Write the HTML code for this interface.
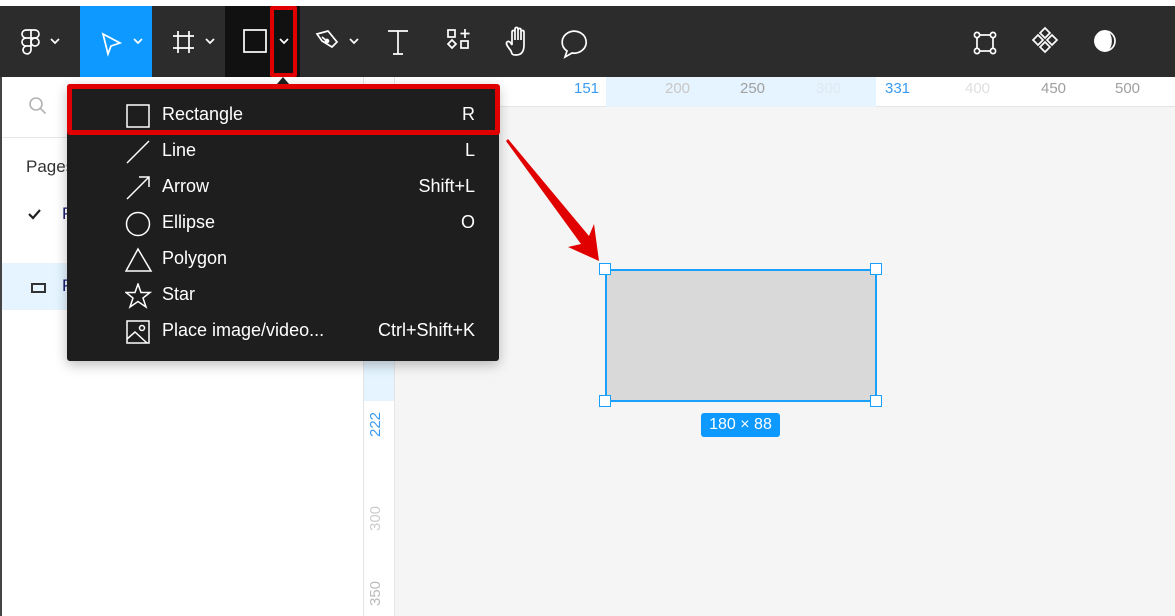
<!DOCTYPE html>
<html><head><meta charset="utf-8"><style>
*{margin:0;padding:0;box-sizing:border-box}
body{width:1175px;height:616px;overflow:hidden;background:#f5f5f5;font-family:"Liberation Sans",sans-serif;position:relative}
.abs{position:absolute}
.mi{position:absolute;left:0;width:432px;height:36px;color:#fff;font-size:18px}
.mi .t{position:absolute;left:95px;top:7px}
.mi .k{position:absolute;right:24px;top:7px}
.mi svg{position:absolute;left:58px;top:6px}
.rl{position:absolute;top:80px;font-size:15px;color:#b3b3b3}
</style></head><body>
<div class="abs" style="left:0;top:0;width:1175px;height:6px;background:#fff"></div>
<div class="abs" style="left:0;top:6px;width:1175px;height:71px;background:#2c2c2c"></div>
<div class="abs" style="left:80px;top:6px;width:72px;height:71px;background:#0d99ff"></div>
<div class="abs" style="left:225px;top:6px;width:75px;height:71px;background:#111"></div>
<svg class="abs" style="left:0;top:6px" width="1175" height="71" fill="none" stroke="#fff" stroke-width="1.7">
<g transform="translate(22,24)"><path d="M4 0h5v8H4a4 4 0 0 1 0-8zM9 0h4a4 4 0 0 1 0 8H9zM4 8h5v8H4a4 4 0 0 1 0-8zM4 16h5v4a4 4 0 1 1-5-4z"/><circle cx="13" cy="12" r="4"/></g>
<path d="M51 33l4 4 4-4"/>
<path d="M103 28l5 20 3-8 9-3z"/><path d="M134 33l4 4 4-4"/>
<path d="M178 25v22M189 25v22M173 30h21M173 42h21"/><path d="M206 33l4 4 4-4"/>
<rect x="244" y="24" width="22" height="22"/>
<path d="M317 28l11-3 9 11-5 5-10-6zM322 31l6 5" /><circle cx="327" cy="35" r="1.5"/><path d="M350 33l4 4 4-4"/>
<path d="M388 25h20M398 25v23M393 48h10"/>
<rect x="448" y="24" width="7" height="7"/><path d="M465 23v9M460.5 27.5h9"/><path d="M452 34l4 4-4 4-4-4z"/><rect x="461" y="35" width="7" height="7"/>
<path d="M511 45c-2-3-6-7-4-9s4 1 5 3v-13c0-2 3-2 3 0v8-11c0-2 3-2 3 0v11-10c0-2 3-2 3 0v10-8c0-2 3-2 3 0v13c0 7-3 10-8 10s-4-2-5-4z"/>
<path d="M567 45a12 11 0 1 1 5 2l-7 4z"/>
<rect x="977" y="29" width="16" height="16"/><g fill="#2c2c2c"><circle cx="977" cy="29" r="2.6"/><circle cx="993" cy="29" r="2.6"/><circle cx="977" cy="45" r="2.6"/><circle cx="993" cy="45" r="2.6"/></g>
<path d="M1045 24l5 5-5 5-5-5zM1045 38l5 5-5 5-5-5zM1038 31l5 5-5 5-5-5zM1052 31l5 5-5 5-5-5z" transform="translate(0,-2)"/>
<circle cx="1105" cy="35" r="10"/><path d="M1105 25a10 10 0 0 0 0 20a6 10 0 0 0 0-20z" fill="#fff"/>
</svg>
<svg class="abs" style="left:278px;top:36px" width="12" height="10" fill="none" stroke="#fff" stroke-width="1.7"><path d="M2 3l4 4 4-4"/></svg>
<div class="abs" style="left:270px;top:6px;width:27px;height:71px;border:4px solid #e00000;border-radius:2px"></div>
<div class="abs" style="left:0;top:77px;width:363px;height:539px;background:#fff;border-left:2px solid #444"></div>
<div class="abs" style="left:2px;top:137px;width:361px;height:1px;background:#e6e6e6"></div>
<svg class="abs" style="left:28px;top:96px" width="20" height="20" fill="none" stroke="#b3b3b3" stroke-width="1.6"><circle cx="8" cy="8" r="6"/><path d="M12.5 12.5l5 5"/></svg>
<div class="abs" style="left:26px;top:157px;font-size:17px;color:#333">Pages</div>
<svg class="abs" style="left:27px;top:207px" width="16" height="14" fill="none" stroke="#222" stroke-width="2.2"><path d="M2 7l4 4 7-8"/></svg>
<div class="abs" style="left:62px;top:204px;font-size:17px;color:#1a1a6e">P</div>
<div class="abs" style="left:2px;top:263px;width:361px;height:47px;background:#e5f4ff"></div>
<div class="abs" style="left:31px;top:283px;width:15px;height:10px;border:2px solid #333"></div>
<div class="abs" style="left:62px;top:276px;font-size:17px;color:#1a1a6e">P</div>
<div class="abs" style="left:363px;top:77px;width:812px;height:30px;background:#fff;border-bottom:1px solid #e5e5e5"></div>
<div class="abs" style="left:606px;top:77px;width:270px;height:30px;background:#e5f4ff"></div>
<div class="abs" style="left:363px;top:77px;width:32px;height:539px;background:#fff;border-left:1px solid #e5e5e5;border-right:1px solid #e5e5e5"></div>
<div class="abs" style="left:364px;top:270px;width:30px;height:131px;background:#e5f4ff"></div>
<div class="rl" style="left:574px;color:#3a9bf0">151</div>
<div class="rl" style="left:665px;color:#c8c8c8">200</div>
<div class="rl" style="left:740px;color:#a0a0a0">250</div>
<div class="rl" style="left:816px;color:#e0e8f0">300</div>
<div class="rl" style="left:885px;color:#3a9bf0">331</div>
<div class="rl" style="left:965px;color:#e0e0e0">400</div>
<div class="rl" style="left:1041px;color:#a0a0a0">450</div>
<div class="rl" style="left:1115px;color:#a0a0a0">500</div>
<div class="abs" style="transform:rotate(-90deg);transform-origin:0 0;font-size:15px;color:#3a9bf0;top:437px;left:367px">222</div>
<div class="abs" style="left:367px;top:531px;transform:rotate(-90deg);transform-origin:0 0;font-size:15px;color:#ccc">300</div>
<div class="abs" style="left:367px;top:606px;transform:rotate(-90deg);transform-origin:0 0;font-size:15px;color:#bbb">350</div>
<div class="abs" style="left:605px;top:269px;width:272px;height:133px;background:#d9d9d9;border:2px solid #18a0fb"></div>
<div class="abs" style="left:599px;top:263px;width:12px;height:12px;background:#fff;border:1.5px solid #18a0fb"></div>
<div class="abs" style="left:870px;top:263px;width:12px;height:12px;background:#fff;border:1.5px solid #18a0fb"></div>
<div class="abs" style="left:599px;top:395px;width:12px;height:12px;background:#fff;border:1.5px solid #18a0fb"></div>
<div class="abs" style="left:870px;top:395px;width:12px;height:12px;background:#fff;border:1.5px solid #18a0fb"></div>
<div class="abs" style="left:701px;top:413px;width:79px;height:24px;background:#0d99ff;border-radius:3px;color:#fff;font-size:16px;text-align:center;line-height:24px">180 × 88</div>
<svg class="abs" style="left:0;top:0" width="1175" height="616"><path d="M506 141l2-2 81 97 5-12 5 37-31-14 13-3z" fill="#e00000"/></svg>
<div class="abs" style="left:277px;top:77px;width:0;height:0;border-left:6px solid transparent;border-right:6px solid transparent;border-bottom:7px solid #1e1e1e"></div>
<div class="abs" style="left:67px;top:84px;width:432px;height:277px;background:#1e1e1e;border-radius:3px;box-shadow:0 4px 12px rgba(0,0,0,.25)">
<div class="mi" style="top:13px"><svg width="26" height="26" fill="none" stroke="#fff" stroke-width="1.5"><rect x="2" y="2" width="22" height="22"/></svg><span class="t">Rectangle</span><span class="k">R</span></div>
<div class="mi" style="top:49px"><svg width="26" height="26" fill="none" stroke="#fff" stroke-width="1.5"><path d="M2 24L24 2"/></svg><span class="t">Line</span><span class="k">L</span></div>
<div class="mi" style="top:85px"><svg width="26" height="26" fill="none" stroke="#fff" stroke-width="1.5"><path d="M2 24L24 2M14 2h10v10"/></svg><span class="t">Arrow</span><span class="k">Shift+L</span></div>
<div class="mi" style="top:121px"><svg width="26" height="26" fill="none" stroke="#fff" stroke-width="1.5"><circle cx="13" cy="13" r="11.5"/></svg><span class="t">Ellipse</span><span class="k">O</span></div>
<div class="mi" style="top:157px"><svg width="28" height="26" fill="none" stroke="#fff" stroke-width="1.5"><path d="M13 2L1 24h25z"/></svg><span class="t">Polygon</span></div>
<div class="mi" style="top:193px"><svg width="28" height="26" fill="none" stroke="#fff" stroke-width="1.5"><path d="M13 1l3 8.5h9l-7 5.5 3 9-8-5.5-8 5.5 3-9-7-5.5h9z"/></svg><span class="t">Star</span></div>
<div class="mi" style="top:229px"><svg width="26" height="26" fill="none" stroke="#fff" stroke-width="1.5"><rect x="2" y="2" width="22" height="22"/><circle cx="17" cy="9" r="2.5"/><path d="M2 20l8-7 12 11"/></svg><span class="t">Place image/video...</span><span class="k">Ctrl+Shift+K</span></div>
</div>
<div class="abs" style="left:67px;top:84px;width:433px;height:51px;border:5px solid #e00000;border-radius:3px"></div>
</body></html>
